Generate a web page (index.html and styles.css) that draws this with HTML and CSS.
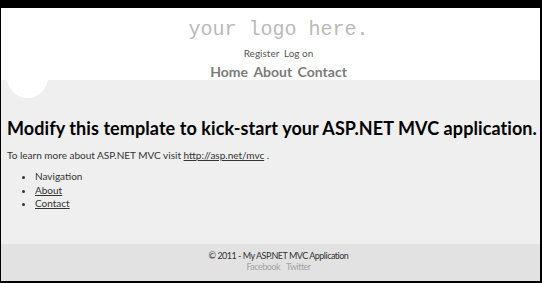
FILE: index.html
```html
<!DOCTYPE html>
<html>
<head>
    <title>Home Page - My ASP.NET MVC Application</title>
    <meta name="viewport" content="width=device-width, initial-scale=1.0">
    <link rel="stylesheet" href="styles.css">
</head>
<body>
    <div class="page">
        <header class="site-header">
            <p class="site-title">your logo here.</p>
            <div class="login">
                <a href="#">Register</a>
                <a href="#">Log on</a>
            </div>
            <nav class="menu">
                <a href="#">Home</a>
                <a href="#">About</a>
                <a href="#">Contact</a>
            </nav>
        </header>

        <!-- decorative white circle over the header edge -->
        <div class="bubble"></div>

        <main class="content">
            <h1>Modify this template to kick-start your ASP.NET MVC application.</h1>
            <p class="intro">To learn more about ASP.NET MVC visit <a href="http://asp.net/mvc"> http://asp.net/mvc</a> .</p>
            <ul class="side-list">
                <li>Navigation</li>
                <li><a href="#"> About</a></li>
                <li><a href="#"> Contact</a></li>
            </ul>
        </main>

        <footer class="site-footer">
            <p>&copy; 2011 - My ASP.NET MVC Application</p>
            <div class="social">
                <a href="#">Facebook</a>
                <a href="#">Twitter</a>
            </div>
        </footer>
    </div>
</body>
</html>
```

FILE: styles.css
```css
html, body {
    height: 100%;
}

body {
    margin: 0;
    background-color: #000;
    font-family: Lato, "Open Sans", sans-serif;
    color: #333;
}

.page {
    position: relative;
    box-sizing: border-box;
    height: calc(100% - 10px);
    margin: 8px 2px 2px 1px;
    display: flex;
    flex-direction: column;
    overflow: hidden;
}

.site-header {
    height: 72px;
    box-sizing: border-box;
    padding: 10px 0 0 16px;
    background-color: #fff;
    text-align: center;
}

.site-title {
    margin: 0;
    font-family: "Liberation Mono", "DejaVu Sans Mono", monospace;
    font-size: 20px;
    line-height: 24px;
    color: #b9b9b9;
}

.login {
    margin-top: 5px;
    font-size: 10px;
    line-height: 12px;
}

.login a {
    color: #555;
    text-decoration: none;
    margin: 0 1px;
}

.menu {
    margin-top: 5px;
    font-size: 14px;
    font-weight: 700;
    line-height: 16px;
}

.menu a {
    color: #7b7b7b;
    text-decoration: none;
    margin: 0 1px;
}

.bubble {
    position: absolute;
    left: 6px;
    top: 49px;
    width: 41px;
    height: 41px;
    border-radius: 50%;
    background-color: #fff;
}

.content {
    flex: 1;
    background-color: #efefef;
    padding: 37px 6px 0;
}

h1 {
    margin: 0;
    font-size: 18px;
    line-height: 22px;
    font-weight: 700;
    letter-spacing: 0.08px;
    color: #000;
    white-space: nowrap;
}

.intro {
    margin: 9px 0 0;
    font-size: 10px;
    line-height: 14px;
}

.intro a,
.side-list a {
    color: #333;
}

.side-list {
    margin: 8px 0 0;
    padding-left: 28px;
    font-size: 10px;
    line-height: 13.5px;
}

.site-footer {
    height: 37px;
    box-sizing: border-box;
    padding: 6px 0 0 16px;
    background-color: #e2e2e2;
    text-align: center;
    font-size: 9px;
    line-height: 11px;
    letter-spacing: -0.5px;
}

.site-footer p {
    margin: 0;
}

.social a {
    color: #a3a3a3;
    text-decoration: none;
    margin: 0 2px;
}
```
